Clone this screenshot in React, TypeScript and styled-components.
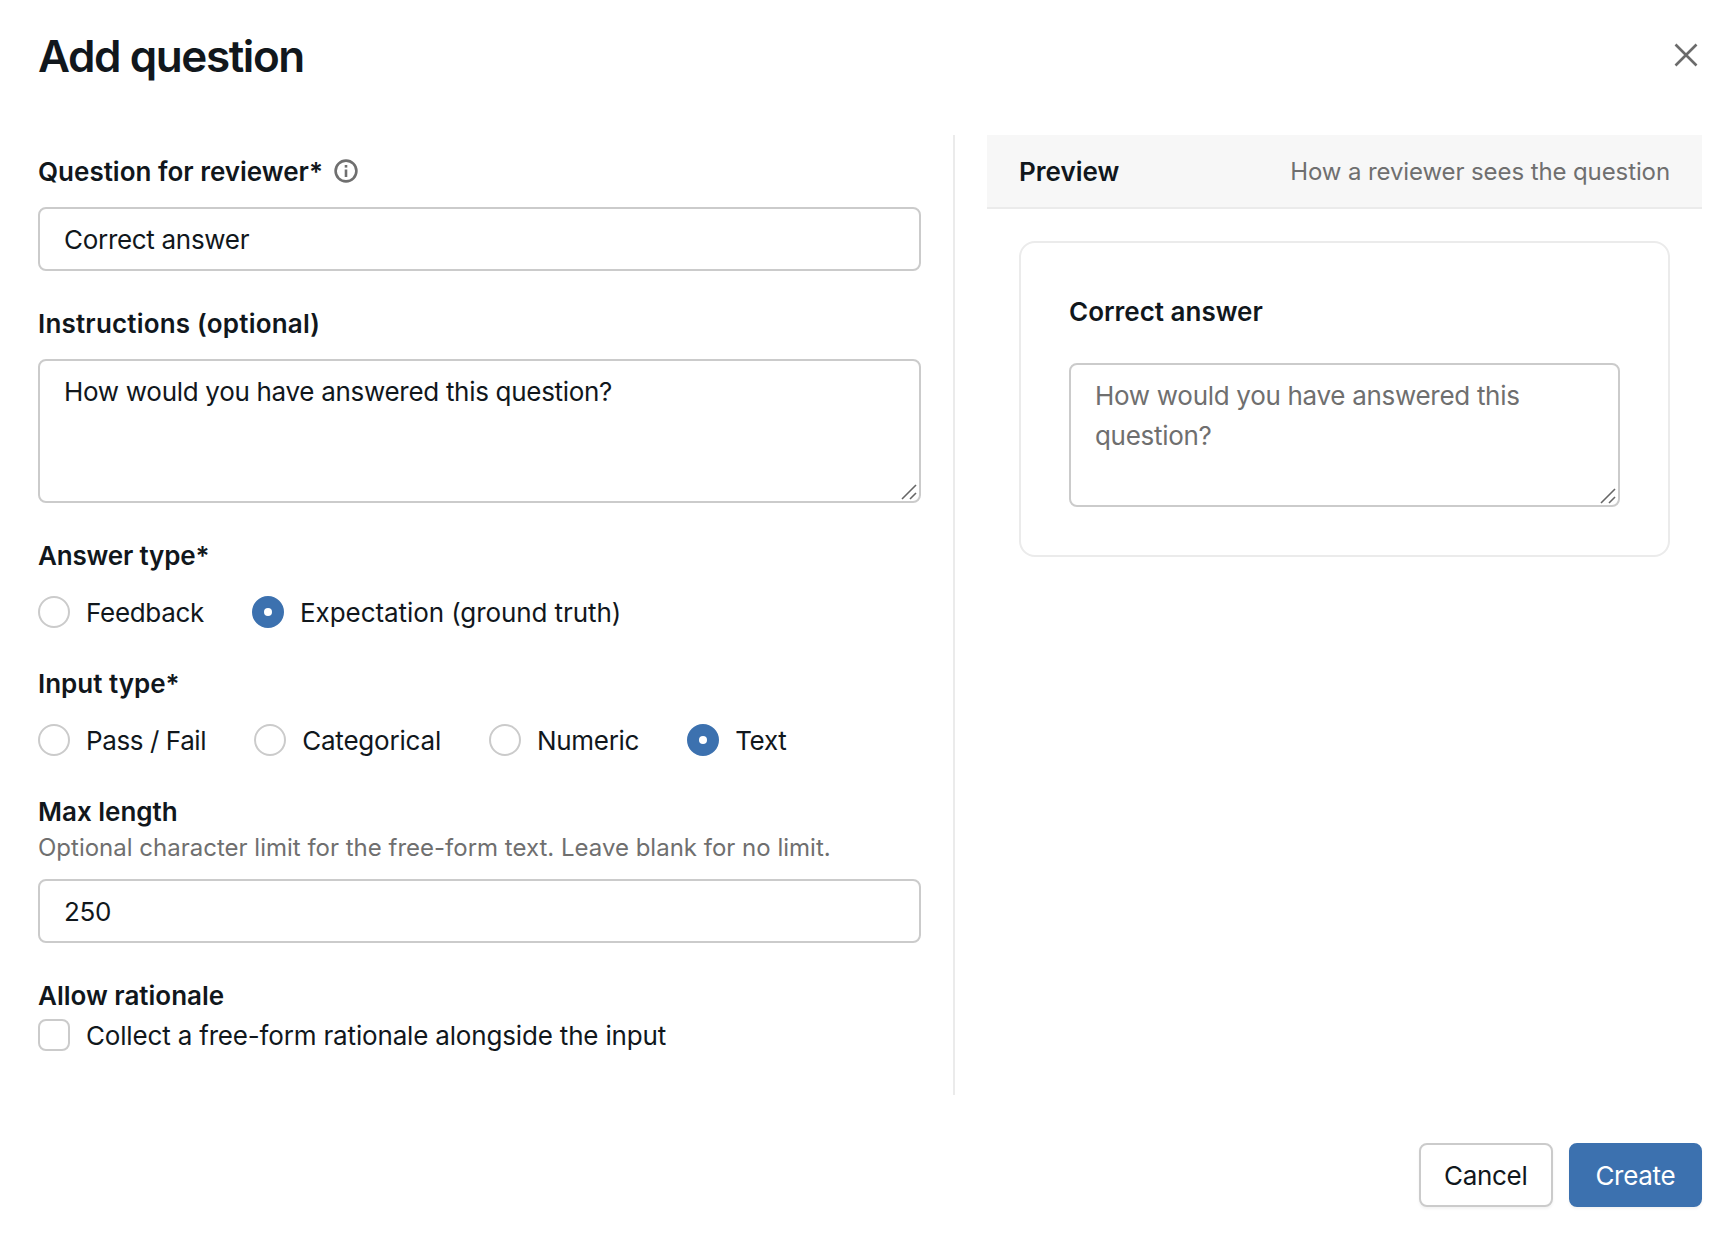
import styled, { createGlobalStyle } from "styled-components";

const GlobalStyle = createGlobalStyle`
    html, body {
        margin: 0;
        padding: 0;
        background: #fff;
    }
    body {
        font-family: "Inter", "Liberation Sans", sans-serif;
        font-size: 26px;
        line-height: 40px;
        letter-spacing: -0.3px;
        color: #11171c;
    }
    * {
        box-sizing: border-box;
    }
`;

const Modal = styled.div`
    width: 1736px;
    height: 1242px;
    padding: 28px 34px 0 38px;
    overflow: hidden;
`;

const Header = styled.header`
    display: flex;
    justify-content: space-between;
    align-items: center;
    height: 56px;
    margin-bottom: 51px;
`;

const Title = styled.h1`
    margin: 0;
    font-size: 44px;
    line-height: 56px;
    font-weight: 600;
    letter-spacing: -1.4px;
`;

const CloseButton = styled.button`
    display: flex;
    padding: 0;
    margin: 0 4px 3px 0;
    border: 0;
    background: none;
    color: #6b6b6b;
`;

const Columns = styled.div`
    display: flex;
    height: 960px;
`;

const FormColumn = styled.div`
    width: 917px;
    padding: 16px 32px 0 0;
    border-right: 2px solid #ebebeb;
    display: flex;
    flex-direction: column;
    flex-shrink: 0;
`;

const Field = styled.section`
    margin-bottom: 32px;
`;

const LabelRow = styled.div`
    display: flex;
    align-items: center;
    gap: 11px;
`;

const Label = styled.div<{ $tracking?: number }>`
    font-weight: 600;
    height: 40px;
    line-height: 42px;
    letter-spacing: ${(p) => p.$tracking ?? 0}px;
`;

const Hint = styled.div`
    font-size: 24px;
    line-height: 34px;
    letter-spacing: 0;
    color: #6f6f6f;
`;

const TextInput = styled.input`
    display: block;
    width: 100%;
    height: 64px;
    margin-top: 16px;
    padding: 1px 24px 0;
    border: 2px solid #cbcbcb;
    border-radius: 8px;
    background: #fff;
    font: inherit;
    letter-spacing: inherit;
    color: inherit;
    outline: none;
`;

const HintedInput = styled(TextInput)`
    margin-top: 14px;
`;

const AreaWrap = styled.div`
    position: relative;
    margin-top: ${(p: { $gap: number }) => p.$gap}px;
`;

const TextArea = styled.textarea`
    display: block;
    width: 100%;
    height: 144px;
    padding: 11px 24px 9px;
    border: 2px solid #cbcbcb;
    border-radius: 8px;
    background: #fff;
    font: inherit;
    letter-spacing: inherit;
    color: inherit;
    resize: none;
    outline: none;

    &::placeholder {
        color: #6f6f6f;
        opacity: 1;
    }
`;

const ResizeHandle = styled.svg`
    position: absolute;
    right: 2px;
    bottom: 2px;
    width: 18px;
    height: 18px;
    color: #666;
`;

const OptionRow = styled.div`
    display: flex;
    gap: 48px;
    margin: 17px 0 -1px;
`;

const Option = styled.label`
    display: flex;
    align-items: center;
    gap: 16px;
    height: 40px;
`;

const OptionText = styled.span<{ $tracking?: number }>`
    line-height: 42px;
    height: 40px;
    letter-spacing: ${(p) => p.$tracking ?? -0.3}px;
`;

const Radio = styled.span<{ $checked?: boolean }>`
    width: 32px;
    height: 32px;
    border-radius: 50%;
    display: flex;
    align-items: center;
    justify-content: center;
    background: ${(p) => (p.$checked ? "#3c71af" : "#fff")};
    border: 2px solid ${(p) => (p.$checked ? "#3c71af" : "#cbcbcb")};

    &::after {
        content: "";
        display: ${(p) => (p.$checked ? "block" : "none")};
        width: 8px;
        height: 8px;
        border-radius: 50%;
        background: #fff;
    }
`;

const Checkbox = styled.span`
    width: 32px;
    height: 32px;
    border: 2px solid #cbcbcb;
    border-radius: 8px;
    background: #fff;
`;

const PreviewColumn = styled.aside`
    flex: 1;
    margin-left: 32px;
`;

const PreviewHeader = styled.div`
    display: flex;
    justify-content: space-between;
    align-items: center;
    height: 74px;
    padding: 0 32px;
    background: #f7f7f7;
    border-bottom: 2px solid #ebebeb;
`;

const PreviewNote = styled.span`
    font-size: 24px;
    height: 40px;
    line-height: 42px;
    letter-spacing: -0.1px;
    color: #6f6f6f;
`;

const PreviewBody = styled.div`
    padding: 32px;
`;

const Card = styled.div`
    padding: 48px;
    border: 2px solid #ebebeb;
    border-radius: 16px;
`;

const Footer = styled.footer`
    display: flex;
    justify-content: flex-end;
    gap: 16px;
    margin-top: 48px;
`;

const Button = styled.button<{ $primary?: boolean }>`
    height: 64px;
    padding: 2px ${(p) => (p.$primary ? 24.6 : 23.4)}px 0;
    border-radius: 8px;
    font: inherit;
    letter-spacing: inherit;
    color: ${(p) => (p.$primary ? "#fff" : "#11171c")};
    background: ${(p) => (p.$primary ? "#3c71af" : "#fff")};
    border: 2px solid ${(p) => (p.$primary ? "#3c71af" : "#cbcbcb")};
    box-shadow: 0 2px 3px rgba(0, 0, 0, 0.05);
`;

const Grip = () => (
    <ResizeHandle viewBox="0 0 18 18" fill="none" stroke="currentColor" strokeWidth="1.6">
        <path d="M1 16 L15 2" />
        <path d="M9 16 L15 10" />
    </ResizeHandle>
);

const answerTypes = [
    { label: "Feedback", checked: false },
    { label: "Expectation (ground truth)", checked: true, tracking: -0.08 },
];

const inputTypes = [
    { label: "Pass / Fail", checked: false, tracking: -0.4 },
    { label: "Categorical", checked: false, tracking: -0.2 },
    { label: "Numeric", checked: false, tracking: -0.3 },
    { label: "Text", checked: true },
];

export default function App() {
    return (
        <Modal>
            <GlobalStyle />
            <Header>
                <Title>Add question</Title>
                <CloseButton aria-label="Close">
                    <svg width="24" height="24" viewBox="0 0 24 24" fill="none" stroke="currentColor" strokeWidth="2.6">
                        <path d="M1.5 1.5 L22.5 22.5 M22.5 1.5 L1.5 22.5" />
                    </svg>
                </CloseButton>
            </Header>
            <Columns>
                <FormColumn>
                    <Field>
                        <LabelRow>
                            <Label>Question for reviewer*</Label>
                            <svg width="24" height="24" viewBox="0 0 24 24" fill="none" stroke="#6f6f6f" strokeWidth="2.6">
                                <circle cx="12" cy="12" r="10.4" />
                                <path d="M12 10.5 V18" />
                                <path d="M12 6 V8.6" />
                            </svg>
                        </LabelRow>
                        <TextInput readOnly value="Correct answer" />
                    </Field>
                    <Field>
                        <Label $tracking={0.2}>Instructions (optional)</Label>
                        <AreaWrap $gap={16}>
                            <TextArea readOnly value="How would you have answered this question?" />
                            <Grip />
                        </AreaWrap>
                    </Field>
                    <Field>
                        <Label $tracking={-0.18}>Answer type*</Label>
                        <OptionRow>
                            {answerTypes.map((o) => (
                                <Option key={o.label}>
                                    <Radio $checked={o.checked} />
                                    <OptionText $tracking={o.tracking}>{o.label}</OptionText>
                                </Option>
                            ))}
                        </OptionRow>
                    </Field>
                    <Field>
                        <Label>Input type*</Label>
                        <OptionRow>
                            {inputTypes.map((o) => (
                                <Option key={o.label}>
                                    <Radio $checked={o.checked} />
                                    <OptionText $tracking={o.tracking}>{o.label}</OptionText>
                                </Option>
                            ))}
                        </OptionRow>
                    </Field>
                    <Field>
                        <Label>Max length</Label>
                        <Hint>Optional character limit for the free-form text. Leave blank for no limit.</Hint>
                        <HintedInput readOnly value="250" />
                    </Field>
                    <Field>
                        <Label>Allow rationale</Label>
                        <Option>
                            <Checkbox />
                            <OptionText $tracking={-0.17}>Collect a free-form rationale alongside the input</OptionText>
                        </Option>
                    </Field>
                </FormColumn>
                <PreviewColumn>
                    <PreviewHeader>
                        <Label>Preview</Label>
                        <PreviewNote>How a reviewer sees the question</PreviewNote>
                    </PreviewHeader>
                    <PreviewBody>
                        <Card>
                            <Label>Correct answer</Label>
                            <AreaWrap $gap={32}>
                                <TextArea readOnly placeholder="How would you have answered this question?" />
                                <Grip />
                            </AreaWrap>
                        </Card>
                    </PreviewBody>
                </PreviewColumn>
            </Columns>
            <Footer>
                <Button>Cancel</Button>
                <Button $primary>Create</Button>
            </Footer>
        </Modal>
    );
}
